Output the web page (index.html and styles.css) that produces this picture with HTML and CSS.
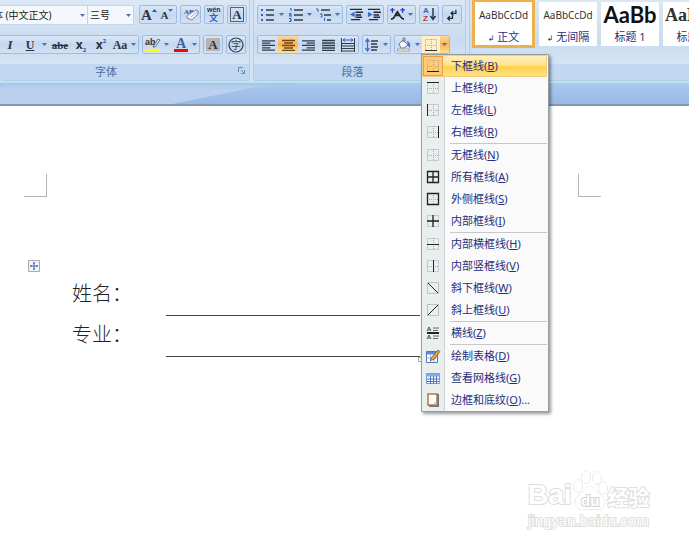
FILE: index.html
```html
<!DOCTYPE html>
<html lang="zh-CN">
<head>
<meta charset="utf-8">
<title>文档</title>
<link rel="stylesheet" href="styles.css">
</head>
<body>
<svg class="defs" aria-hidden="true">
  <symbol id="down" viewBox="0 0 5 5"><path d="M0 1h5L2.500 4z" fill="#4d73ad"/></symbol>
  <symbol id="grid" viewBox="0 0 12 12"><path d="M.5.5h11v11H.5zM6.500 0v12M0 6.500h12" fill="none" stroke="#a4a9ac" stroke-dasharray="1 1"/></symbol>
  <symbol id="lines" viewBox="0 0 14 12"><path d="M0 1.500h14M0 6.500h14M0 11.500h14M0 4h9M0 9h9" stroke="#333b48" stroke-width="1.300"/></symbol>
</svg>

<header class="ribbon">
  <section class="group font-group">
    <div class="row">
      <div class="combo"><input class="family" aria-label="字体名称" value="体 (中文正文)"><svg class="arrow"><use href="#down"/></svg></div>
      <div class="combo"><input class="size" aria-label="字号" value="三号"><svg class="arrow"><use href="#down"/></svg></div>
      <div class="cluster after-combo">
        <button class="tool serif grow" aria-label="增大字体">A<svg class="tick" viewBox="0 0 5 5"><path d="M0 4h5L2.500 1z" fill="#2c55b0"/></svg></button>
        <button class="tool serif shrink" aria-label="缩小字体">A<svg class="tick"><use href="#down"/></svg></button>
      </div>
      <div class="cluster"><button class="tool broad" aria-label="清除格式"><svg width="16" height="16" viewBox="0 0 16 16"><text x="1" y="7" font-size="7" font-family="Liberation Serif" font-weight="bold" fill="#46536a">AB</text><path d="M4 9l4-3 5-3 2 1v3l-6 6-5-2z" fill="#eef2fa" stroke="#7785a3"/><path d="M8 10l6-5" stroke="#a6b1ca"/></svg></button></div>
      <div class="cluster"><button class="tool" aria-label="拼音指南"><svg width="16" height="17" viewBox="0 0 16 17"><text x="1" y="6" font-size="7" font-family="Liberation Sans" font-weight="bold" fill="#26324b">wén</text><text x="3" y="15" font-size="9" font-family="Noto Sans CJK SC" font-weight="bold" fill="#3361c9">文</text></svg></button></div>
      <div class="cluster"><button class="tool serif" aria-label="字符边框"><span class="boxed">A</span></button></div>
    </div>
    <div class="row">
      <div class="cluster open-left">
        <button class="tool serif italic">I</button>
        <button class="tool serif underline">U</button><svg class="arrow"><use href="#down"/></svg>
        <button class="tool serif strike">abe</button>
        <button class="tool bold">x<sub>2</sub></button>
        <button class="tool bold">x<sup>2</sup></button>
        <button class="tool serif case">Aa</button><svg class="arrow"><use href="#down"/></svg>
      </div>
      <div class="cluster">
        <button class="tool broad" aria-label="突出显示"><svg width="16" height="16" viewBox="0 0 16 16"><text x="0" y="8" font-size="9" font-family="Liberation Sans" font-weight="bold" fill="#333">ab</text><path d="M8 10l5-8 2 1-5 7z" fill="#e7edf7" stroke="#56729e"/><path d="M1 13.500h14" stroke="#ff0" stroke-width="3"/></svg></button><svg class="arrow"><use href="#down"/></svg>
        <button class="tool broad" aria-label="字体颜色"><svg width="16" height="16" viewBox="0 0 16 16"><text x="3" y="11" font-size="14" font-family="Liberation Serif" font-weight="bold" fill="#3d61a9">A</text><path d="M1 13.500h14" stroke="#f00" stroke-width="3"/></svg></button><svg class="arrow"><use href="#down"/></svg>
      </div>
      <div class="cluster"><button class="tool serif" aria-label="字符底纹"><span class="shaded">A</span></button></div>
      <div class="cluster"><button class="tool" aria-label="带圈字符"><svg width="16" height="16" viewBox="0 0 16 16"><circle cx="8" cy="8" r="7" fill="none" stroke="#333b48" stroke-width="1.200"/><text x="3" y="12" font-size="10" font-family="Noto Sans CJK SC" fill="#333b48">字</text></svg></button></div>
    </div>
    <div class="caption">字体<svg class="launcher" width="7" height="7" viewBox="0 0 7 7"><path d="M.5 5V.5H5M3 3l3 3M6.500 3v3.500H3" fill="none" stroke="#6b8cb8"/></svg></div>
  </section>

  <section class="group para-group">
    <div class="row">
      <div class="cluster lists">
        <button class="tool" aria-label="项目符号"><svg width="13" height="14" viewBox="0 0 13 14"><path d="M0 2h2M0 7h2M0 12h2" stroke="#315fc2" stroke-width="2"/><path d="M5 2h8M5 7h8M5 12h8" stroke="#333b48" stroke-width="1.300"/></svg></button><svg class="arrow"><use href="#down"/></svg>
        <button class="tool" aria-label="编号"><svg width="14" height="14" viewBox="0 0 14 14"><path d="M1 0h1v3M0 5.500h2v1.500H0v1h3M0 10.500h2v1.500H1h1v1.500H0" fill="none" stroke="#315fc2"/><path d="M5 2h9M5 7h9M5 12h9" stroke="#333b48" stroke-width="1.300"/></svg></button><svg class="arrow"><use href="#down"/></svg>
        <button class="tool" aria-label="多级列表"><svg width="16" height="14" viewBox="0 0 16 14"><path d="M0 1h2v3M4 6h2v3H4.500M8.500 10v3" fill="none" stroke="#315fc2"/><path d="M5 2h9M8 7h7M11 12h4" stroke="#333b48" stroke-width="1.300"/></svg></button><svg class="arrow"><use href="#down"/></svg>
      </div>
      <div class="cluster">
        <button class="tool" aria-label="减少缩进量"><svg width="14" height="13" viewBox="0 0 15 14"><path d="M1 1.500h13M7 4.500h8M7 7.500h6M7 10h7M2 12.500h10" stroke="#222a36" stroke-width="1.500"/><path d="M6 4v6L1 7z" fill="#3a6ccd"/></svg></button>
        <button class="tool" aria-label="增加缩进量"><svg width="14" height="13" viewBox="0 0 15 14"><path d="M1 1.500h13M7 4.500h8M7 7.500h6M7 10h7M2 12.500h10" stroke="#222a36" stroke-width="1.500"/><path d="M1 4v6l5-3z" fill="#3a6ccd"/></svg></button>
      </div>
      <div class="cluster"><button class="tool" aria-label="中文版式"><svg width="15" height="13" viewBox="0 0 16 14"><path d="M1 12q3 0 5-5l2-3 3 5q2 3 4 3M5 8h6" fill="none" stroke="#222" stroke-width="1.800"/><path d="M0 2h5M2.500 0v5M11 2h5M13.500 0v5" stroke="#2b39bd" stroke-width="1.400"/></svg></button><svg class="arrow"><use href="#down"/></svg></div>
      <div class="cluster"><button class="tool" aria-label="排序"><svg width="15" height="17" viewBox="0 0 15 17"><text x="1" y="7" font-size="8" font-family="Liberation Sans" font-weight="bold" fill="#3962b0">A</text><text x="1" y="15" font-size="8" font-family="Liberation Sans" font-weight="bold" fill="#b63a4a">Z</text><path d="M11 2v11M8.500 10l2.500 3.500 2.500-3.500" fill="none" stroke="#333b48" stroke-width="1.500"/></svg></button></div>
      <div class="cluster"><button class="tool" aria-label="显示编辑标记"><svg width="12" height="12" viewBox="0 0 13 14"><path d="M11 1v4H6M8 2.500L5.500 5 8 7.500M7 8v3H2M4 8.500L1.500 11 4 13.500" fill="none" stroke="#222a36" stroke-width="1.500"/></svg></button></div>
    </div>
    <div class="row">
      <div class="cluster">
        <button class="tool align" aria-label="左对齐"><svg width="13" height="12"><use href="#lines"/></svg></button>
        <button class="tool align on" aria-label="居中"><svg width="13" height="12" viewBox="0 0 13 12"><path d="M0 1.500h13M2 4h9M0 6.500h13M2 9h9M0 11.500h13" stroke="#6a4a20" stroke-width="1.300"/></svg></button>
        <button class="tool align flip" aria-label="右对齐"><svg width="13" height="12"><use href="#lines"/></svg></button>
        <button class="tool align" aria-label="两端对齐"><svg width="13" height="12" viewBox="0 0 13 12"><path d="M0 1.500h13M0 4h13M0 6.500h13M0 9h13M0 11.500h13" stroke="#333b48" stroke-width="1.300"/></svg></button>
        <button class="tool align" aria-label="分散对齐"><svg width="14" height="14" viewBox="0 0 14 14"><path d="M.5 0v14M13.500 0v14M1 5.500h12M1 8h12M1 10.500h12M1 13h12" stroke="#333b48"/><path d="M2 2h10M4 .5L2 2l2 1.500M10 .5L12 2l-2 1.500" fill="none" stroke="#315fc2"/></svg></button>
      </div>
      <div class="cluster"><button class="tool" aria-label="行距"><svg width="14" height="14" viewBox="0 0 14 14"><path d="M2.500 1v12M.5 4l2-3 2 3M.5 10l2 3 2-3" fill="none" stroke="#3b6ed0" stroke-width="1.300"/><path d="M6 3h7M6 6h6M6 9h7M6 12h6" stroke="#333b48" stroke-width="1.300"/></svg></button><svg class="arrow"><use href="#down"/></svg></div>
      <div class="cluster fills">
        <button class="tool" aria-label="底纹"><svg width="16" height="15" viewBox="0 0 16 15"><path d="M3 7l4-4 5 5-4 3H5z" fill="#f3f6fb" stroke="#657a9d"/><path d="M7 5V1h2v4" fill="none" stroke="#657a9d"/><path d="M11 4q4 1 3 7l-2-2z" fill="#4276c9"/><path d="M1.500 12h12v2h-12z" fill="#fff" stroke="#a5a198"/></svg></button><svg class="arrow"><use href="#down"/></svg>
        <button class="tool border-main" aria-label="下框线"><svg width="12" height="12" viewBox="0 0 12 12"><use href="#grid"/><path d="M0 11.500h12" stroke="#333"/></svg></button><button class="border-more on" aria-label="更多框线"><svg class="arrow"><use href="#down"/></svg></button>
      </div>
    </div>
    <div class="caption">段落</div>
  </section>

  <section class="group style-group">
    <div class="gallery">
      <button class="style selected"><span class="sample">AaBbCcDd</span><span class="name"><i>↲</i> 正文</span></button>
      <button class="style"><span class="sample">AaBbCcDd</span><span class="name"><i>↲</i> 无间隔</span></button>
      <button class="style"><span class="sample heading">AaBb</span><span class="name">标题 1</span></button>
      <button class="style"><span class="sample heading2">AaBb</span><span class="name">标题 2</span></button>
    </div>
    <div class="caption"></div>
  </section>

  <div class="menu" role="menu">
    <button class="item hot" role="menuitem"><svg viewBox="0 0 12 12"><use href="#grid"/><path d="M0 11.500h12" stroke="#222"/></svg><span>下框线(<u>B</u>)</span></button>
    <button class="item" role="menuitem"><svg viewBox="0 0 12 12"><use href="#grid"/><path d="M0 .5h12" stroke="#222"/></svg><span>上框线(<u>P</u>)</span></button>
    <button class="item" role="menuitem"><svg viewBox="0 0 12 12"><use href="#grid"/><path d="M.5 0v12" stroke="#222"/></svg><span>左框线(<u>L</u>)</span></button>
    <button class="item" role="menuitem"><svg viewBox="0 0 12 12"><use href="#grid"/><path d="M11.500 0v12" stroke="#222"/></svg><span>右框线(<u>R</u>)</span></button>
    <hr>
    <button class="item" role="menuitem"><svg viewBox="0 0 12 12"><use href="#grid"/></svg><span>无框线(<u>N</u>)</span></button>
    <button class="item" role="menuitem"><svg viewBox="0 0 12 12"><path d="M.5.5h11v11H.5zM6 0v12M0 6h12" fill="none" stroke="#222" stroke-width="1.300"/></svg><span>所有框线(<u>A</u>)</span></button>
    <button class="item" role="menuitem"><svg viewBox="0 0 12 12"><use href="#grid"/><path d="M.5.5h11v11H.5z" fill="none" stroke="#222" stroke-width="1.300"/></svg><span>外侧框线(<u>S</u>)</span></button>
    <button class="item" role="menuitem"><svg viewBox="0 0 12 12"><use href="#grid"/><path d="M6 0v12M0 6h12" stroke="#222" stroke-width="1.300"/></svg><span>内部框线(<u>I</u>)</span></button>
    <hr>
    <button class="item" role="menuitem"><svg viewBox="0 0 12 12"><use href="#grid"/><path d="M0 6.500h12" stroke="#222"/></svg><span>内部横框线(<u>H</u>)</span></button>
    <button class="item" role="menuitem"><svg viewBox="0 0 12 12"><use href="#grid"/><path d="M6.500 0v12" stroke="#222"/></svg><span>内部竖框线(<u>V</u>)</span></button>
    <button class="item" role="menuitem"><svg viewBox="0 0 12 12"><path d="M.5.5h11v11H.5z" fill="none" stroke="#999" stroke-dasharray="1 1"/><path d="M1 1l10 10" stroke="#222"/></svg><span>斜下框线(<u>W</u>)</span></button>
    <button class="item" role="menuitem"><svg viewBox="0 0 12 12"><path d="M.5.5h11v11H.5z" fill="none" stroke="#999" stroke-dasharray="1 1"/><path d="M1 11L11 1" stroke="#222"/></svg><span>斜上框线(<u>U</u>)</span></button>
    <hr>
    <button class="item" role="menuitem"><svg viewBox="0 0 12 12"><path d="M0 6h12" stroke="#222" stroke-width="2"/><path d="M0 4l2-4 2 4M1 3h2M0 12l2-4 2 4M1 11h2" fill="none" stroke="#333" stroke-width=".8"/><path d="M6 1h6M6 3.500h5M6 9h6M6 11.500h5" stroke="#555" stroke-width=".9"/></svg><span>横线(<u>Z</u>)</span></button>
    <hr>
    <button class="item wide" role="menuitem"><svg viewBox="0 0 14 14"><path d="M.5 2.500h11v11H.5z" fill="#fff" stroke="#5876bd"/><path d="M1 3h10v2.500H1z" fill="#628be0"/><path d="M4.500 5v8M8 5v8M1 9h10" stroke="#9db7e4"/><path d="M5 9l7-8 2 1.500-6 8-3.500 1z" fill="#e9a33c" stroke="#6d4630" stroke-width=".7"/></svg><span>绘制表格(<u>D</u>)</span></button>
    <button class="item wide" role="menuitem"><svg viewBox="0 0 14 14"><path d="M.5 2.500h13v10H.5z" fill="#fff" stroke="#7d9bd6"/><path d="M1 3h12v2.500H1z" fill="#8aaae8"/><path d="M4.500 5v8M7.500 5v8M10.500 5v8M1 8h12M1 10.500h12" stroke="#4a72c7"/></svg><span>查看网格线(<u>G</u>)</span></button>
    <button class="item wide" role="menuitem"><svg viewBox="0 0 14 14"><path d="M3 1h10v13H3z" fill="#6b7485"/><path d="M2 1h9v11H2z" fill="#fff" stroke="#ba7443" stroke-width="1.500"/><path d="M8 12V9h3z" fill="#e4c9ad"/></svg><span>边框和底纹(<u>O</u>)...</span></button>
  </div>
</header>
<div class="band"></div>

<main class="page">
  <div class="margins"><span class="corner left"></span><span class="corner right"></span></div>
  <div class="sheet">
    <svg class="mover" width="12" height="12" viewBox="0 0 12 12"><path d="M.5.5h11v11H.5z" fill="#f3f3f3" stroke="#aaa"/><path d="M6 2v8M2 6h8M5 3h2M5 9h2M3 5v2M9 5v2" stroke="#3d6ac4"/></svg>
    <table class="form">
      <tr><th>姓名：</th><td></td></tr>
      <tr><th>专业：</th><td></td></tr>
    </table>
    <span class="resizer"></span>
  </div>
</main>

<div class="watermark">
  <div class="brand"><span>Bai</span><svg width="36" height="40" viewBox="0 0 36 40"><g fill="#fff" stroke="#d9d9d9"><ellipse cx="6" cy="16" rx="4.500" ry="6"/><ellipse cx="14" cy="7" rx="4.500" ry="6"/><ellipse cx="25" cy="8" rx="4.500" ry="6"/><ellipse cx="31" cy="18" rx="4.500" ry="6"/><path d="M11 21q7-9 14 0l6 6q5 7-2 12-5 1-11 0-7 1-11 0-7-5-2-12z"/></g><text x="9" y="36" font-size="15" font-family="Liberation Sans" font-weight="bold" fill="#fff">du</text></svg><span class="cn">经验</span></div>
  <div class="site">jingyan.baidu.com</div>
</div>
</body>
</html>
```
FILE: styles.css
```css
* { box-sizing: border-box; }
body {
  margin: 0;
  min-height: 100vh;
  overflow: hidden;
  position: relative;
  background: #fff;
  font: 11px/16px "Noto Sans", "Noto Sans CJK SC", sans-serif;
  color: #1f2f7c;
}
button, input { font: inherit; color: inherit; border: 0; padding: 0; background: none; }
.defs { position: absolute; width: 0; height: 0; }

.ribbon {
  position: relative;
  display: flex;
  gap: 3px;
  background: #d3e3f5;
  border-bottom: 2px solid #b9e6ee;
}
.group {
  display: flex;
  flex-direction: column;
  border: 1px solid #b3cdea;
  border-top: 0;
  border-radius: 0 0 3px 3px;
  background: linear-gradient(#dbe7f5, #cfdff2 40%, #c9dbf0 50%, #dceaf8);
}
.font-group { flex: none; border-left: 0; padding-top: 5px; }
.para-group { flex: none; padding-top: 5px; padding-inline: 3px; }
.style-group { flex: 1; min-width: 0; border-right: 0; }
.row { display: flex; gap: 3px; height: 20px; margin-bottom: 10px; padding-right: 2px; }
.row + .row { margin-bottom: 9px; }
.para-group .row { padding-right: 0; }
.para-group .caption { margin-inline: -3px; }
.caption {
  position: relative;
  height: 16px;
  line-height: 15px;
  text-align: center;
  color: #4a6ea8;
  background: #c1d8f0;
  padding-right: 37px;
}
.para-group .caption { padding-right: 14px; }
.launcher { position: absolute; right: 4px; top: 3px; }

.combo { display: flex; align-items: center; height: 20px; background: #f4f8fd; border: 1px solid #c0d4ee; border-left: 0; }
.combo + .combo { margin-left: -3px; }
.combo input { font-size: 10px; color: #222; outline: 0; }
.family { width: 85px; margin-left: -7px; }
.size { width: 36px; padding-left: 2px; }
.combo .arrow { margin-right: 2px; }
.arrow { flex: none; width: 5px; height: 5px; margin: 0 2px; }
.after-combo { margin-left: 2px; }

.cluster {
  display: flex;
  align-items: center;
  height: 19px;
  border: 1px solid #9fbce2;
  border-radius: 2px;
  background: linear-gradient(#d9e7f8, #c5d8f0 50%, #d2e2f5);
}
.cluster.open-left { border-left: 0; border-radius: 0 2px 2px 0; }
.tool {
  display: flex;
  align-items: center;
  justify-content: center;
  height: 17px;
  min-width: 18px;
  padding: 0 1px;
  color: #2b3444;
}
.broad { min-width: 19px; }
.serif { font-family: "Liberation Serif", serif; font-weight: bold; }
.grow { font-size: 15px; }
.shrink { font-size: 11px; }
.tick { width: 5px; height: 5px; align-self: flex-start; margin-top: 2px; }
.boxed, .shaded { width: 14px; font-size: 13px; line-height: 13px; }
.boxed { border: 1px solid #53627c; }
.shaded { background: #b5b5b5; }
.italic { font-size: 13px; font-style: italic; min-width: 20px; }
.underline { font-size: 12px; text-decoration: underline; min-width: 20px; }
.strike { font-size: 11px; text-decoration: line-through; min-width: 22px; }
.bold { font-weight: bold; font-size: 12px; min-width: 20px; }
.bold sub, .bold sup { font-size: 6px; line-height: 6px; color: #2c55b0; }
.bold sub { align-self: flex-end; }
.bold sup { align-self: flex-start; margin-top: 2px; }
.case { font-size: 12px; }
.lists .tool { min-width: 19px; }
.align { min-width: 20px; }
.flip svg { transform: scaleX(-1); }
.on { background: linear-gradient(#fbd7a0, #f9b352 50%, #fde396); }
.border-main { background: #fff0c8; min-width: 18px; }
.border-more { height: 17px; display: flex; align-items: center; }

.gallery { display: flex; gap: 4px; height: 49px; overflow: hidden; padding-left: 2px; margin-bottom: 15px; }
.style {
  flex: none;
  display: flex;
  flex-direction: column;
  align-items: center;
  width: 58px;
  height: 44px;
  margin-top: 2px;
  background: #fff;
  overflow: hidden;
}
.style.selected { width: 63px; height: 48px; margin-top: 0; border: 3px solid #eeb04a; border-top-width: 2px; }
.sample { height: 27px; line-height: 27px; font-size: 10px; color: #333; }
.heading { font: bold 22px/26px Lato, sans-serif; color: #111; }
.heading2 { font: bold 18px/27px "Liberation Serif", serif; align-self: flex-start; padding-left: 2px; }
.name i { font: 8px "DejaVu Sans", sans-serif; }

.menu {
  position: absolute;
  z-index: 2;
  left: 421px;
  top: 54px;
  width: 128px;
  padding-right: 1px;
  border: 1px solid #979da3;
  background: linear-gradient(90deg, #e9eeee 22px, #cfd4d4 22px, #cfd4d4 23px, #fafafa 23px);
  box-shadow: 2px 2px 3px #0006;
}
.item { display: flex; align-items: center; width: 100%; height: 22px; white-space: nowrap; }
.item svg { width: 12px; height: 12px; margin: 0 12px 0 5px; padding: 0; flex: none; overflow: visible; }
.item.wide svg { width: 14px; height: 14px; margin: 0 11px 0 4px; }
.item.hot { background: linear-gradient(#fff2bd, #ffe28a 48%, #ffd04a 50%, #ffe48c); outline: 1px solid #f3cf7b; outline-offset: -1px; }
.item.hot svg { box-shadow: 0 0 0 3px #ffca75, 0 0 0 4px #ef9c43; background: #ffca75; }
.menu hr { height: 1px; margin: 0 0 0 28px; border: 0; background: #c5c7c9; }

.band {
  position: relative;
  height: 23px;
  background: linear-gradient(#a8c3e9, #bad1f0 30%, #b9d0ef);
  border-bottom: 2px solid #8796ad;
}
.band::after {
  content: "";
  position: absolute;
  inset: 0;
  background: linear-gradient(#acc8ee, #98b9e6);
  clip-path: polygon(25% 100%, 37% 20%, 44% 0, 100% 0, 100% 100%);
}

.page { padding: 68px 0 0 24px; }
.margins { display: flex; gap: 531px; }
.corner { width: 23px; height: 23px; border-bottom: 1px solid #b5b5b5; }
.corner.left { border-right: 1px solid #b5b5b5; }
.corner.right { border-left: 1px solid #b5b5b5; }
.sheet { position: relative; margin-top: 77px; padding-left: 48px; }
.mover { position: absolute; left: 4px; top: -14px; }
.form { border-collapse: collapse; color: #222; }
.form th { width: 94px; padding: 0 0 3px; font: 300 20px/38px "Noto Sans CJK SC", sans-serif; text-align: left; white-space: nowrap; }
.form td { width: 254px; border-bottom: 1px solid #444; }
.resizer { position: absolute; left: 394px; bottom: -5px; width: 5px; height: 5px; border: 1px solid #aaa; background: #fff; }

.watermark { position: absolute; left: 528px; top: 469px; color: #fff; -webkit-text-stroke: 2px #dedede; paint-order: stroke; }
.watermark text { stroke: #d2d2d2; stroke-width: 2px; paint-order: stroke; }
.brand { display: flex; align-items: flex-end; height: 41px; font: bold 28px/30px "Liberation Sans", sans-serif; }
.brand .cn { font: bold 21px/28px "Noto Sans CJK SC", sans-serif; }
.site { font: 15px/21px "Liberation Sans", sans-serif; }
```
